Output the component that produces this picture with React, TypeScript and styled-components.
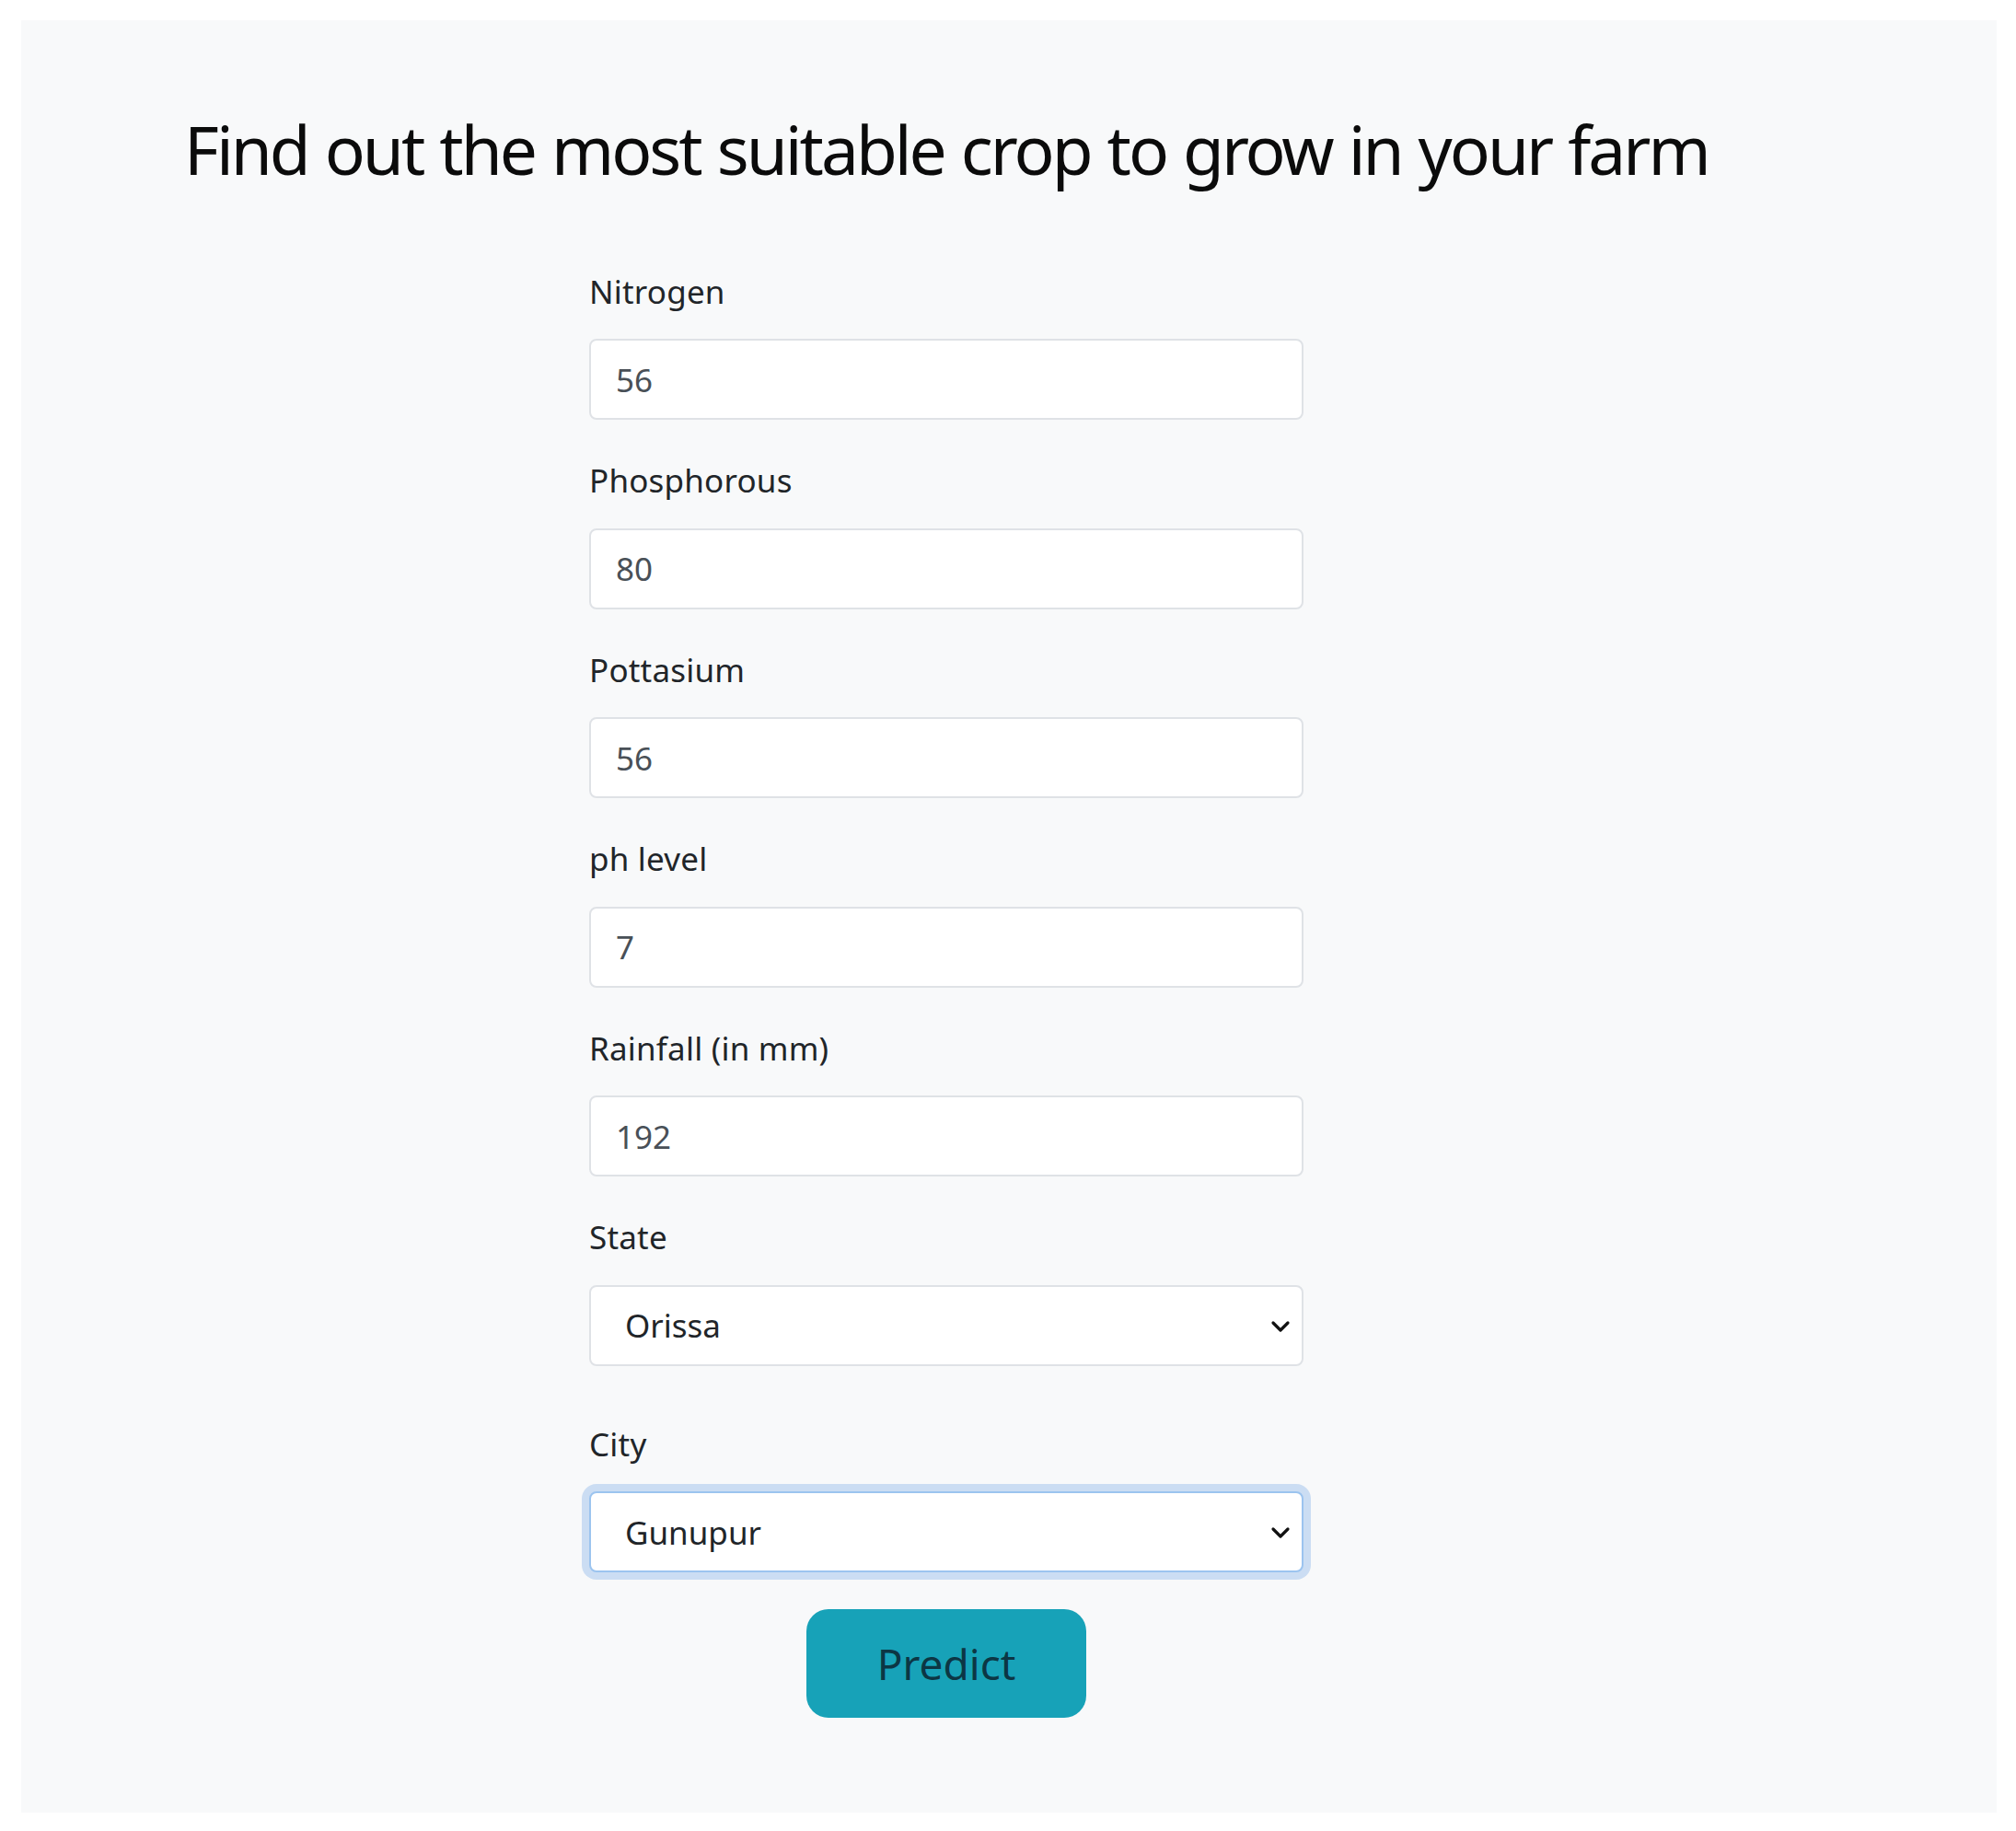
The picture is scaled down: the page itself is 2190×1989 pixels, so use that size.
import React from "react";
import styled, { createGlobalStyle } from "styled-components";

const GlobalStyle = createGlobalStyle`
  html, body { margin: 0; padding: 0; background: #ffffff; }
  body { font-family: "Noto Sans", "Open Sans", sans-serif; color: #212529; }
  * { box-sizing: border-box; }
`;

const Page = styled.div`
  padding: 22px 21px 20px 23px;
`;

const Panel = styled.main`
  background: #f8f9fa;
  min-height: 1947px;
  padding: 96px 0 0 177px;
`;

const Title = styled.h1`
  margin: 0;
  font-size: 73px;
  line-height: 1.2;
  font-weight: 400;
  color: #0b0b0b;
  letter-spacing: -3px;
  word-spacing: 2px;
  white-space: nowrap;
`;

const Form = styled.form`
  width: 776px;
  margin: 85px 0 0 440px;
  display: flex;
  flex-direction: column;
`;

const Field = styled.div<{ $extra?: number }>`
  display: flex;
  flex-direction: column;
  margin-bottom: ${(p) => 40 + (p.$extra ?? 0)}px;
`;

const Label = styled.label`
  font-size: 35px;
  line-height: 1.5;
  color: #212529;
  letter-spacing: 0.2px;
  margin-bottom: 25px;
`;

const TextInput = styled.input`
  height: 88px;
  width: 100%;
  border: 2px solid #dfe2e6;
  border-radius: 8px;
  background: #ffffff;
  padding: 0 27px;
  font-family: "Noto Sans", sans-serif;
  font-size: 35px;
  color: #495057;
  outline: none;
`;

const SelectWrap = styled.div`
  position: relative;
`;

const Select = styled.select<{ $focused?: boolean }>`
  appearance: none;
  -webkit-appearance: none;
  height: 88px;
  width: 100%;
  border: 2px solid ${(p) => (p.$focused ? "#9cc4ef" : "#dfe2e6")};
  border-radius: 8px;
  background: #ffffff;
  padding: 0 60px 0 37px;
  font-family: "Noto Sans", sans-serif;
  font-size: 35px;
  color: #212529;
  outline: none;
  box-shadow: ${(p) => (p.$focused ? "0 0 0 8px rgba(120, 170, 230, 0.35)" : "none")};
`;

const Chevron = styled.svg`
  position: absolute;
  right: 14px;
  top: 50%;
  width: 22px;
  height: 14px;
  margin-top: -6px;
  pointer-events: none;
`;

const ButtonRow = styled.div`
  display: flex;
  justify-content: center;
`;

const PredictButton = styled.button`
  width: 304px;
  height: 118px;
  border: none;
  border-radius: 24px;
  background: #17a2b8;
  color: #0c3644;
  font-family: "Noto Sans", sans-serif;
  font-size: 46px;
  cursor: pointer;
`;

const fields = [
  { label: "Nitrogen", value: "56" },
  { label: "Phosphorous", value: "80" },
  { label: "Pottasium", value: "56" },
  { label: "ph level", value: "7" },
  { label: "Rainfall (in mm)", value: "192" },
];

const ChevronIcon = () => (
  <Chevron viewBox="0 0 22 14">
    <polyline points="3,3 11,11 19,3" fill="none" stroke="#111" strokeWidth="3.2" strokeLinecap="round" strokeLinejoin="round" />
  </Chevron>
);

export default function App() {
  return (
    <>
      <GlobalStyle />
      <Page>
        <Panel>
          <Title>Find out the most suitable crop to grow in your farm</Title>
          <Form onSubmit={(e) => e.preventDefault()}>
            {fields.map((f) => (
              <Field key={f.label}>
                <Label>{f.label}</Label>
                <TextInput type="text" defaultValue={f.value} />
              </Field>
            ))}
            <Field $extra={19}>
              <Label>State</Label>
              <SelectWrap>
                <Select defaultValue="Orissa">
                  <option>Orissa</option>
                </Select>
                <ChevronIcon />
              </SelectWrap>
            </Field>
            <Field>
              <Label>City</Label>
              <SelectWrap>
                <Select $focused defaultValue="Gunupur">
                  <option>Gunupur</option>
                </Select>
                <ChevronIcon />
              </SelectWrap>
            </Field>
            <ButtonRow>
              <PredictButton type="submit">Predict</PredictButton>
            </ButtonRow>
          </Form>
        </Panel>
      </Page>
    </>
  );
}
